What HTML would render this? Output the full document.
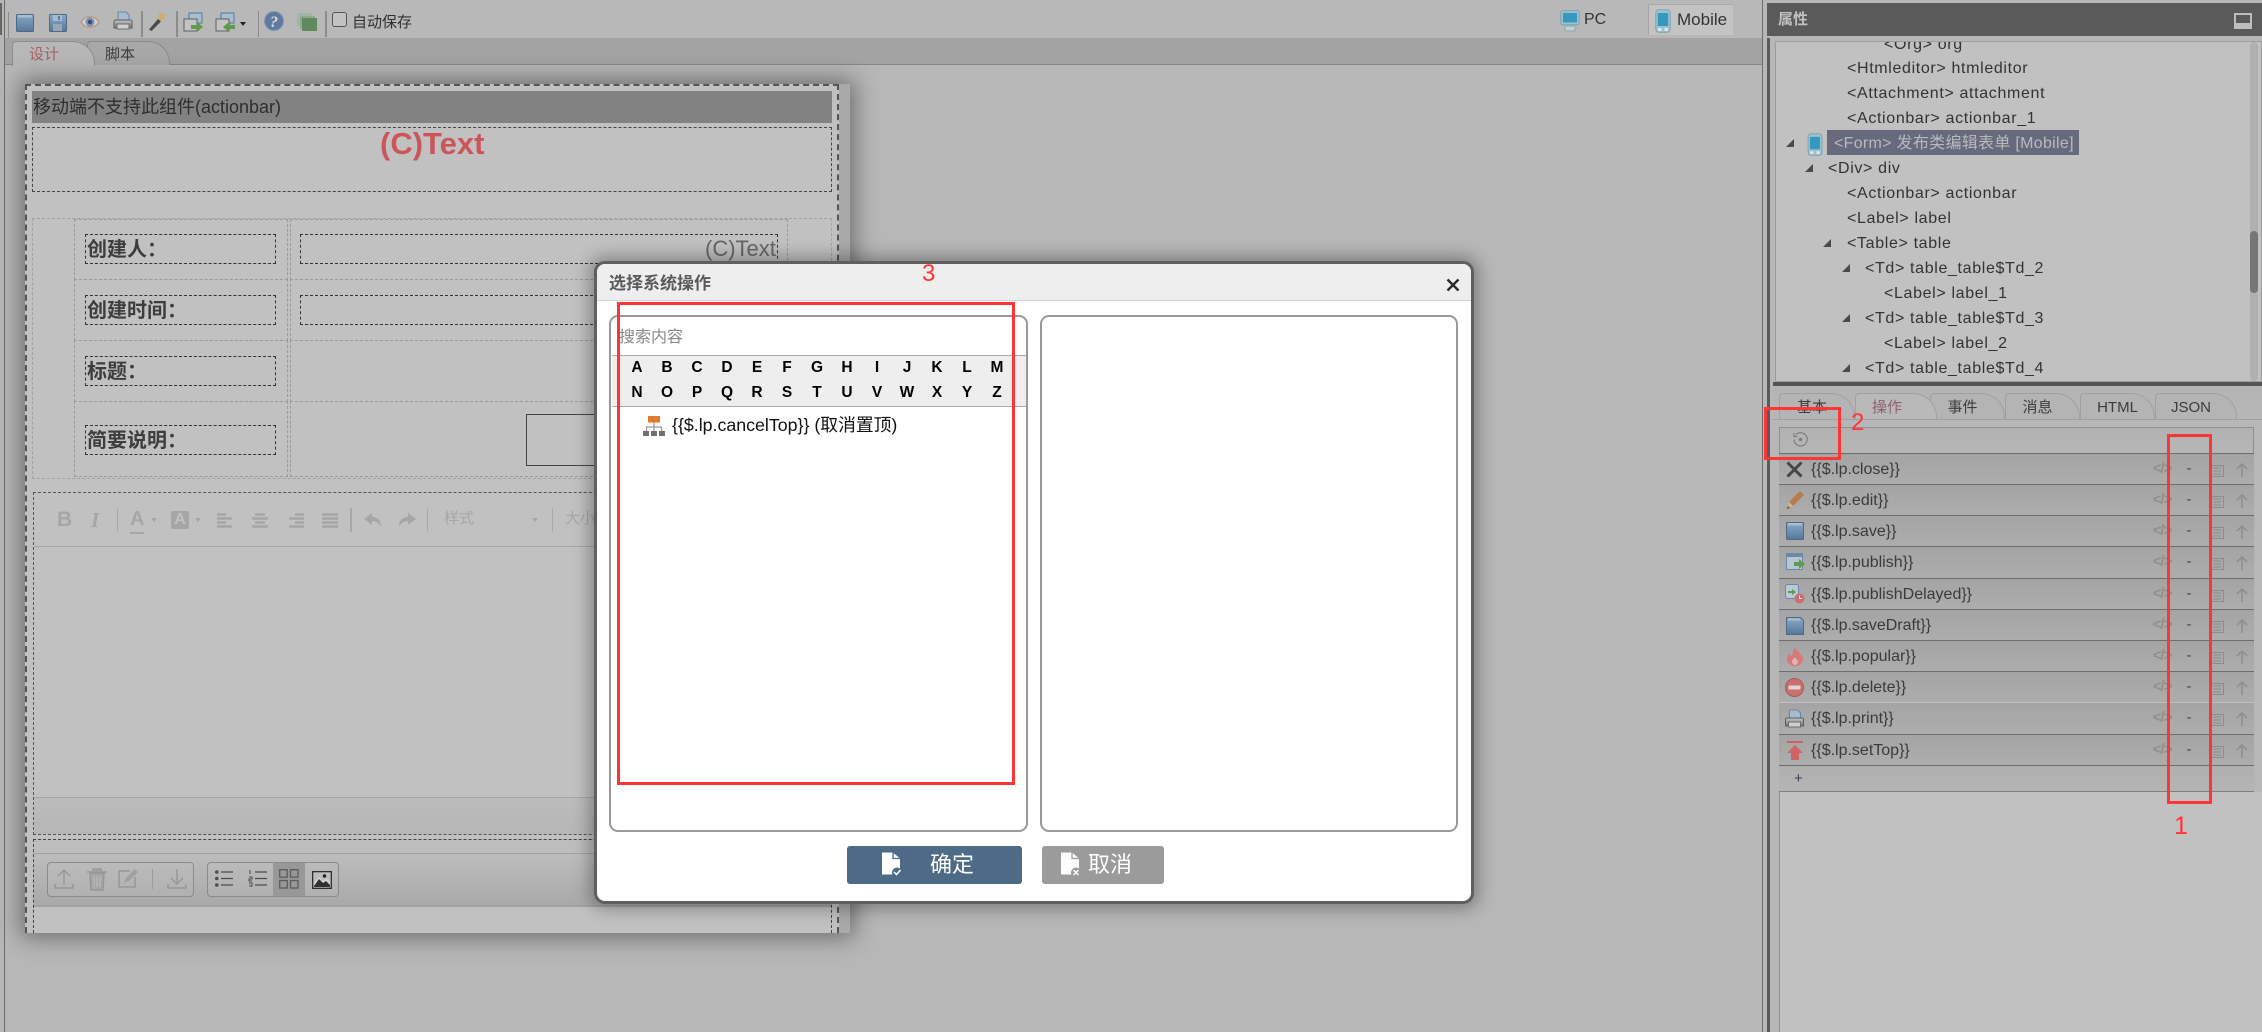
<!DOCTYPE html>
<html lang="zh"><head><meta charset="utf-8"><title>表单设计</title>
<style>
*{box-sizing:border-box}
html,body{margin:0;padding:0;width:2262px;height:1032px;overflow:hidden;background:#b7b7b7}
body{position:relative;font-family:"Liberation Sans","Noto Sans CJK SC",sans-serif;color:#333}
.abs{position:absolute}
svg{position:absolute;display:block;overflow:visible}
.sep{position:absolute;top:11px;width:2px;height:26px;background:#8b8b8b}
.lb{position:absolute;left:85px;width:191px;height:30px;border:1px dashed #333;font-weight:700;font-size:20px;line-height:30px;color:#3d3d3d;padding-left:1px;white-space:nowrap}
.rf{position:absolute;left:300px;width:478px;height:30px;border:1px dashed #333}
.cell{position:absolute;border:1px dashed #9a9a9a}
.tree{position:absolute;font-size:16px;letter-spacing:.65px;line-height:25px;height:25px;color:#333;white-space:nowrap}
.tri{position:absolute;width:0;height:0;border-left:8px solid transparent;border-bottom:8px solid #4a4a4a}
.tab{position:absolute;top:393px;height:26px;border:1px solid #a0a0a0;border-bottom:0;border-radius:4px 24px 0 0;font-size:15px;line-height:28px;text-align:center;color:#3c3c3c;padding-right:10px;background:#b4b4b4}
.row{position:absolute;left:1779px;width:475px;background:linear-gradient(#a4a4a4,#adadad);border-top:1px solid #6d6d6d}
.row .t{position:absolute;left:32px;top:0;line-height:32px;font-size:16px;color:#3a3a3a;white-space:nowrap}
.row .c{position:absolute;left:370px;top:0;width:26px;text-align:center;line-height:30px;font-size:15px;font-weight:700;color:#8f8f8f;letter-spacing:-1px}
.row .d{position:absolute;left:405px;top:0;width:10px;text-align:center;line-height:30px;font-size:15px;color:#444}
.red{position:absolute;border:3px solid #ff3434}
.num{position:absolute;color:#ff3434;line-height:1}
.ltr{display:grid;grid-template-columns:repeat(13,30px);grid-auto-rows:25px;position:absolute;left:622px;top:355px;font-weight:700;font-size:15.5px;color:#000;text-align:center;line-height:25px}
</style></head>
<body>
<svg width="0" height="0" style="position:absolute">
<defs>
<linearGradient id="gb" x1="0" y1="0" x2="0" y2="1"><stop offset="0" stop-color="#8aa8c6"/><stop offset="1" stop-color="#557898"/></linearGradient>
<linearGradient id="gp" x1="0" y1="0" x2="0" y2="1"><stop offset="0" stop-color="#c4c4c4"/><stop offset="1" stop-color="#777"/></linearGradient>
<symbol id="disk" viewBox="0 0 18 18"><rect x=".5" y=".5" width="17" height="17" rx="1" fill="url(#gb)" stroke="#4f6a86"/><rect x="2" y="1" width="14" height="2.5" fill="#a8bed2"/></symbol>
<symbol id="disk2" viewBox="0 0 18 18"><rect x=".5" y=".5" width="17" height="17" rx="1" fill="url(#gb)" stroke="#4f6a86"/><rect x="4" y="1" width="9" height="6" fill="#a9bccd"/><rect x="4" y="10" width="9" height="7" fill="#9aa6b2"/><rect x="9" y="2" width="2" height="4" fill="#5c7c9b"/></symbol>
<symbol id="disk3" viewBox="0 0 18 18"><path d="M.5 .5h14l3 3v14H.5z" fill="url(#gb)" stroke="#4f6a86"/><path d="M2 1.500h11l2 2H2z" fill="#a8bed2"/></symbol>
<symbol id="printer" viewBox="0 0 20 20"><path d="M5 1h8l3 3v5H5z" fill="#a5bcd1" stroke="#6a88a5"/><path d="M2 9h16a2 2 0 0 1 1 2v6H1v-6a2 2 0 0 1 1-2z" fill="url(#gp)" stroke="#5c5c5c"/><rect x="4" y="13" width="12" height="5" fill="#cfcfcf" stroke="#6c6c6c"/></symbol>
<symbol id="listi" viewBox="0 0 14 12"><rect x=".5" y=".5" width="13" height="11" fill="none" stroke="#8c8c8c"/><path d="M3 3h8M3 6h8M3 9h8" stroke="#8c8c8c"/></symbol>
<symbol id="up" viewBox="0 0 12 14"><path d="M6 14V1M1 6l5-5 5 5" fill="none" stroke="#8f8f8f" stroke-width="1.6"/></symbol>
<symbol id="impt" viewBox="0 0 20 20"><rect x="6" y="1" width="13" height="10" fill="#a7bdd2" stroke="#5c7690"/><rect x="1" y="7" width="13" height="12" fill="#c4c4c4" stroke="#5f5f5f"/></symbol>
<symbol id="phone" viewBox="0 0 16 24"><rect x=".8" y=".8" width="14.4" height="22.4" rx="3" fill="#9fc1cf" stroke="#7aa4b6"/><rect x="2.8" y="4" width="10.4" height="13" fill="#3499bd"/><rect x="3" y="19" width="3.5" height="3" fill="#dde5ea"/><rect x="9.5" y="19" width="3.5" height="3" fill="#dde5ea"/></symbol>
</defs>
</svg>

<!-- left edge -->
<div class="abs" style="left:0;top:3px;width:2px;height:32px;background:#666"></div>
<div class="abs" style="left:4px;top:0;width:1px;height:1032px;background:#6c6c6c"></div>

<!-- toolbar -->
<div class="abs" style="left:5px;top:0;width:1757px;height:38px;background:#b8b8b8"></div>
<div class="sep" style="left:8px;width:1px;top:12px"></div>
<svg style="left:16px;top:14px" width="18" height="18"><use href="#disk"/></svg>
<svg style="left:49px;top:14px" width="18" height="18"><use href="#disk2"/></svg>
<svg style="left:80px;top:14px" width="20" height="16" viewBox="0 0 20 16"><path d="M1 8c4-7 14-7 18 0-4 7-14 7-18 0z" fill="#d0d0d0" stroke="#b89a80" stroke-width="1.5"/><circle cx="10" cy="8" r="4.5" fill="#7590b8"/><circle cx="10" cy="8" r="2" fill="#3a4660"/></svg>
<svg style="left:113px;top:11px" width="20" height="20"><use href="#printer"/></svg>
<div class="sep" style="left:141px"></div>
<svg style="left:148px;top:11px" width="19" height="20" viewBox="0 0 19 20"><path d="M1 18.500 10 8l3 2.500L3.500 20z" fill="#4a4a4a"/><path d="M13 0l1.200 3.500L18 3l-2.300 3L18 9l-3.700-.7L13 11.500l-1-3.400-3.500-.6 2.800-2.400L10 1.500l2.500 1.500z" fill="#cfae66"/></svg>
<div class="sep" style="left:176px"></div>
<svg style="left:183px;top:12px" width="20" height="20"><use href="#impt"/></svg><svg style="left:191px;top:22px" width="12" height="10" viewBox="0 0 12 10"><path d="M0 3h6V0l6 5-6 5V7H0z" fill="#5f9a4d"/></svg>
<svg style="left:215px;top:12px" width="20" height="20"><use href="#impt"/></svg><svg style="left:223px;top:22px" width="12" height="10" viewBox="0 0 12 10"><path d="M12 3H6V0L0 5l6 5V7h6z" fill="#5f9a4d"/></svg>
<div class="abs" style="left:240px;top:22px;border-left:3px solid transparent;border-right:3px solid transparent;border-top:4px solid #222"></div>
<div class="sep" style="left:258px;width:1px"></div>
<svg style="left:264px;top:11px" width="20" height="20" viewBox="0 0 20 20"><circle cx="10" cy="10" r="9.5" fill="#5f7a9e" stroke="#8399b5"/><text x="10" y="16" text-anchor="middle" font-family="Liberation Serif" font-weight="700" font-style="italic" font-size="16" fill="#d8dee8">?</text></svg>
<svg style="left:297px;top:13px" width="20" height="18" viewBox="0 0 20 18"><rect x="0" y="0" width="15" height="13" fill="#a5b5a5"/><rect x="3" y="3" width="15" height="13" fill="#8fa88f"/><rect x="5" y="5" width="15" height="13" fill="#5e8a5e"/></svg>
<div class="sep" style="left:325px"></div>
<div class="abs" style="left:332px;top:12px;width:15px;height:15px;border:1px solid #555;border-radius:3px;background:#c2c2c2"></div>
<div class="abs" style="left:352px;top:12px;font-size:15px;line-height:22px;color:#303030">自动保存</div>

<!-- PC / mobile -->
<svg style="left:1560px;top:10px" width="20" height="22" viewBox="0 0 20 22"><rect x=".8" y=".8" width="18.4" height="14" rx="2" fill="#9fc1cf" stroke="#7aa4b6"/><rect x="3" y="3" width="14" height="9.5" fill="#3499bd"/><rect x="5" y="16" width="10" height="5" rx="1" fill="#c0d0d6" stroke="#8aa"/></svg>
<div class="abs" style="left:1584px;top:9px;font-size:16px;line-height:22px;color:#333">PC</div>
<div class="abs" style="left:1648px;top:4px;width:85px;height:31px;background:#c3c3c3;border-left:1px solid #a4a4a4;border-top:1px solid #aaa"></div>
<svg style="left:1655px;top:9px" width="16" height="24"><use href="#phone"/></svg>
<div class="abs" style="left:1677px;top:9px;font-size:17px;line-height:22px;color:#333">Mobile</div>

<!-- tabs strip -->
<div class="abs" style="left:5px;top:38px;width:1757px;height:27px;background:#a3a3a3;border-bottom:1px solid #868686"></div>
<div class="abs" style="left:87px;top:41px;width:83px;height:24px;border:1px solid #8a8a8a;border-bottom:0;border-radius:4px 22px 0 0;background:#a8a8a8;font-size:15px;line-height:25px;color:#3d3d3d;padding-left:17px">脚本</div>
<div class="abs" style="left:12px;top:41px;width:83px;height:25px;border:1px solid #8e8e8e;border-bottom:0;border-radius:4px 22px 0 0;background:#b7b7b7;font-size:15px;line-height:25px;color:#a55f5f;padding-left:16px">设计</div>

<!-- form sheet -->
<div class="abs" style="left:25px;top:84px;width:825px;height:849px;background:#c1c1c1;box-shadow:0 0 22px 4px rgba(0,0,0,.42)"></div>
<div class="abs" style="left:839px;top:84px;width:11px;height:849px;background:#a9a9a9"></div>
<div class="abs" style="left:25px;top:84px;width:814px;height:849px;border:2px dashed #555;border-bottom:0"></div>
<div class="abs" style="left:32px;top:91px;width:800px;height:32px;background:#828282;font-size:18px;line-height:32px;color:#2e2e2e;padding-left:1px;white-space:nowrap">移动端不支持此组件(actionbar)</div>
<div class="abs" style="left:32px;top:127px;width:800px;height:65px;border:1px dashed #444"></div>
<div class="abs" style="left:380px;top:126px;font-size:31px;font-weight:700;color:#cb5558;line-height:36px">(C)Text</div>

<div class="cell" style="left:32px;top:218px;width:800px;height:261px;border-color:#a3a3a3"></div>
<div class="cell" style="left:74px;top:219px;width:214px;height:61px"></div>
<div class="cell" style="left:74px;top:279px;width:214px;height:62px"></div>
<div class="cell" style="left:74px;top:340px;width:214px;height:62px"></div>
<div class="cell" style="left:74px;top:401px;width:214px;height:76px"></div>
<div class="cell" style="left:290px;top:219px;width:498px;height:61px"></div>
<div class="cell" style="left:290px;top:279px;width:498px;height:62px"></div>
<div class="cell" style="left:290px;top:340px;width:498px;height:62px"></div>
<div class="cell" style="left:290px;top:401px;width:498px;height:76px"></div>
<div class="lb" style="top:234px">创建人：</div>
<div class="lb" style="top:295px">创建时间：</div>
<div class="lb" style="top:356px">标题：</div>
<div class="lb" style="top:425px">简要说明：</div>
<div class="rf" style="top:234px"></div>
<div class="rf" style="top:295px"></div>
<div class="abs" style="left:705px;top:235px;font-size:22px;line-height:28px;color:#666">(C)Text</div>
<div class="abs" style="left:526px;top:414px;width:100px;height:52px;border:1px solid #444"></div>

<!-- editor -->
<div class="abs" style="left:33px;top:492px;width:799px;height:343px;border:1px dashed #555"></div>
<div class="abs" style="left:34px;top:546px;width:797px;height:1px;background:#a6a6a6"></div>
<div class="abs" style="left:34px;top:797px;width:797px;height:37px;background:linear-gradient(#bcbcbc,#b6b6b6);border-top:1px solid #a6a6a6"></div>
<div class="abs" style="left:57px;top:507px;font:700 21px/26px 'Liberation Sans',sans-serif;color:#a6a6a6">B</div>
<div class="abs" style="left:91px;top:507px;font:italic 700 21px/26px 'Liberation Serif',serif;color:#a6a6a6">I</div>
<div class="abs" style="left:117px;top:508px;width:1px;height:24px;background:#a8a8a8"></div>
<div class="abs" style="left:130px;top:507px;font:700 20px/24px 'Liberation Sans',sans-serif;color:#a6a6a6;border-bottom:2px solid #a6a6a6;padding-bottom:1px">A</div>
<div class="abs" style="left:151px;top:518px;border-left:3.5px solid transparent;border-right:3.5px solid transparent;border-top:4px solid #a6a6a6"></div>
<div class="abs" style="left:171px;top:511px;width:18px;height:18px;background:#a6a6a6;border-radius:2px;color:#c1c1c1;font:700 16px/18px 'Liberation Sans',sans-serif;text-align:center">A</div>
<div class="abs" style="left:195px;top:518px;border-left:3.5px solid transparent;border-right:3.5px solid transparent;border-top:4px solid #a6a6a6"></div>
<svg style="left:217px;top:513px" width="16" height="15" viewBox="0 0 16 15"><path d="M0 1.500h9M0 5.500h15M0 9.500h9M0 13.500h15" stroke="#a6a6a6" stroke-width="2.400"/></svg>
<svg style="left:252px;top:513px" width="16" height="15" viewBox="0 0 16 15"><path d="M3 1.500h10M0 5.500h16M3 9.500h10M0 13.500h16" stroke="#a6a6a6" stroke-width="2.400"/></svg>
<svg style="left:288px;top:513px" width="16" height="15" viewBox="0 0 16 15"><path d="M7 1.500h9M1 5.500h15M7 9.500h9M1 13.500h15" stroke="#a6a6a6" stroke-width="2.400"/></svg>
<svg style="left:322px;top:513px" width="16" height="15" viewBox="0 0 16 15"><path d="M0 1.500h16M0 5.500h16M0 9.500h16M0 13.500h16" stroke="#a6a6a6" stroke-width="2.400"/></svg>
<div class="abs" style="left:350px;top:508px;width:2px;height:24px;background:#a8a8a8"></div>
<svg style="left:364px;top:513px" width="18" height="15" viewBox="0 0 18 15"><path d="M8 0 0 6l8 6V8c4 0 7 2 9 6 0-6-3-10-9-10z" fill="#a6a6a6"/></svg>
<svg style="left:398px;top:513px" width="18" height="15" viewBox="0 0 18 15"><path d="M10 0l8 6-8 6V8c-4 0-7 2-9 6 0-6 3-10 9-10z" fill="#a6a6a6"/></svg>
<div class="abs" style="left:427px;top:508px;width:1px;height:24px;background:#a8a8a8"></div>
<div class="abs" style="left:444px;top:508px;font-size:15px;line-height:22px;color:#a6a6a6">样式</div>
<div class="abs" style="left:532px;top:518px;border-left:3.5px solid transparent;border-right:3.5px solid transparent;border-top:4px solid #a6a6a6"></div>
<div class="abs" style="left:552px;top:508px;width:1px;height:24px;background:#a8a8a8"></div>
<div class="abs" style="left:565px;top:508px;font-size:15px;line-height:22px;color:#a6a6a6">大小</div>

<!-- attachment -->
<div class="abs" style="left:33px;top:839px;width:799px;height:94px;background:#bdbdbd;border:1px dashed #444;border-bottom:0"></div>
<div class="abs" style="left:34px;top:853px;width:797px;height:54px;background:linear-gradient(#bdbdbd,#a9a9a9);border-top:1px solid #a2a2a2;border-bottom:2px solid #a2a2a2"></div>
<div class="abs" style="left:34px;top:907px;width:797px;height:26px;background:#c1c1c1"></div>
<div class="abs" style="left:47px;top:862px;width:147px;height:35px;border:1px solid #8b8b8b;border-radius:4px;background:rgba(190,190,190,.25)"></div>
<div class="abs" style="left:207px;top:862px;width:132px;height:35px;border:1px solid #8b8b8b;border-radius:4px;background:rgba(190,190,190,.25)"></div>
<svg style="left:54px;top:868px" width="20" height="22" viewBox="0 0 20 22"><path d="M10 17V2M4 8l6-6 6 6M1 16v4h18v-4" fill="none" stroke="#979797" stroke-width="1.500"/></svg>
<svg style="left:87px;top:868px" width="20" height="22" viewBox="0 0 20 22"><path d="M0 4h20M6 3V1h8v2M3 5l1 17h12l1-17z" fill="#a6a6a6" stroke="#979797" stroke-width="1.500"/><path d="M7 8v11M10 8v11M13 8v11" stroke="#bfbfbf"/></svg>
<svg style="left:118px;top:868px" width="21" height="20" viewBox="0 0 21 20"><path d="M17 9v10H1V3h11" fill="none" stroke="#979797" stroke-width="1.500"/><path d="M6 15l2-5 9-9 3 3-9 9z" fill="#a0a0a0"/></svg>
<div class="abs" style="left:152px;top:869px;width:1px;height:20px;background:#9c9c9c"></div>
<svg style="left:167px;top:868px" width="20" height="22" viewBox="0 0 20 22"><path d="M10 1v15M4 10l6 6 6-6M1 16v4h18v-4" fill="none" stroke="#979797" stroke-width="1.500"/></svg>
<svg style="left:215px;top:870px" width="18" height="17" viewBox="0 0 18 17"><circle cx="1.800" cy="2" r="1.800" fill="#4c4c4c"/><circle cx="1.800" cy="8.500" r="1.800" fill="#4c4c4c"/><circle cx="1.800" cy="15" r="1.800" fill="#4c4c4c"/><path d="M6 2h12M6 8.500h12M6 15h12" stroke="#4c4c4c" stroke-width="1.300"/></svg>
<svg style="left:249px;top:870px" width="18" height="17" viewBox="0 0 18 17"><path d="M1 0v4M0 7h3v2H0v2h3M0 13h3v3H0" fill="none" stroke="#4c4c4c"/><path d="M6 2h12M6 8.500h12M6 15h12" stroke="#4c4c4c" stroke-width="1.300"/></svg>
<div class="abs" style="left:273px;top:863px;width:32px;height:33px;background:#989898"></div>
<svg style="left:279px;top:869px" width="20" height="20" viewBox="0 0 20 20"><g fill="none" stroke="#5b5b5b" stroke-width="1.300"><rect x=".7" y=".7" width="7.500" height="7.500"/><rect x="11.500" y=".7" width="7.500" height="7.500"/><rect x=".7" y="11.500" width="7.500" height="7.500"/><rect x="11.500" y="11.500" width="7.500" height="7.500"/></g></svg>
<svg style="left:312px;top:871px" width="20" height="18" viewBox="0 0 20 18"><rect x=".7" y=".7" width="18.600" height="16.600" fill="#d5d5d5" stroke="#303030" stroke-width="1.400"/><path d="M2 15 7 8l4 4 3-2 4 4v2H2z" fill="#303030"/><path d="M2 2h16v8l-4-2-3 2-4-4-5 6z" fill="#bdbdbd"/><circle cx="12.500" cy="5" r="1.700" fill="#222"/></svg>

<!-- right panel -->
<div class="abs" style="left:1762px;top:0;width:1px;height:1032px;background:#6c6c6c"></div>
<div class="abs" style="left:1763px;top:0;width:499px;height:1032px;background:#b7b7b7"></div>
<div class="abs" style="left:1767px;top:3px;width:495px;height:33px;background:#5a5a5a;color:#c2c2c2;font-size:15px;font-weight:700;line-height:34px;padding-left:11px">属性</div>
<svg style="left:2234px;top:13px" width="18" height="16" viewBox="0 0 18 16"><rect width="18" height="16" fill="#bdbdbd"/><rect x="2" y="2" width="14" height="8" fill="#5a5a5a"/></svg>
<div class="abs" style="left:1767px;top:38px;width:3px;height:994px;background:#5a5a5a"></div>
<div class="abs" style="left:1775px;top:41px;width:487px;height:341px;background:#c1c1c1;border:1px solid #9c9c9c;overflow:hidden">
  <div class="tree" style="left:108px;top:-10px">&lt;Org&gt; org</div>
  <div class="tree" style="left:71px;top:14px">&lt;Htmleditor&gt; htmleditor</div>
  <div class="tree" style="left:71px;top:39px">&lt;Attachment&gt; attachment</div>
  <div class="tree" style="left:71px;top:64px">&lt;Actionbar&gt; actionbar_1</div>
  <div class="abs" style="left:51px;top:88px;width:252px;height:25px;background:#666a7c"></div>
  <div class="tree" style="left:58px;top:89px;color:#b9b9bd;letter-spacing:.3px">&lt;Form&gt; 发布类编辑表单 [Mobile]</div>
  <div class="tri" style="left:10px;top:97px"></div>
  <svg style="left:31px;top:91px" width="16" height="23"><use href="#phone"/></svg>
  <div class="tree" style="left:52px;top:114px">&lt;Div&gt; div</div>
  <div class="tri" style="left:29px;top:122px"></div>
  <div class="tree" style="left:71px;top:139px">&lt;Actionbar&gt; actionbar</div>
  <div class="tree" style="left:71px;top:164px">&lt;Label&gt; label</div>
  <div class="tree" style="left:71px;top:189px">&lt;Table&gt; table</div>
  <div class="tri" style="left:47px;top:197px"></div>
  <div class="tree" style="left:89px;top:214px">&lt;Td&gt; table_table$Td_2</div>
  <div class="tri" style="left:66px;top:222px"></div>
  <div class="tree" style="left:108px;top:239px">&lt;Label&gt; label_1</div>
  <div class="tree" style="left:89px;top:264px">&lt;Td&gt; table_table$Td_3</div>
  <div class="tri" style="left:66px;top:272px"></div>
  <div class="tree" style="left:108px;top:289px">&lt;Label&gt; label_2</div>
  <div class="tree" style="left:89px;top:314px">&lt;Td&gt; table_table$Td_4</div>
  <div class="tri" style="left:66px;top:322px"></div>
  <div class="abs" style="left:474px;top:0;width:8px;height:339px;background:#b0b0b0;border-radius:4px"></div>
  <div class="abs" style="left:474px;top:189px;width:8px;height:62px;background:#767676;border-radius:4px"></div>
</div>
<div class="abs" style="left:1773px;top:382px;width:489px;height:4px;background:#555"></div>

<!-- properties -->
<div class="abs" style="left:1773px;top:386px;width:489px;height:646px;background:linear-gradient(#b4b4b4 0,#b7b7b7 34px)"></div>
<div class="tab" style="left:1779px;width:76px">基本</div>
<div class="tab" style="left:2005px;width:75px">消息</div>
<div class="tab" style="left:1930px;width:75px">事件</div>
<div class="tab" style="left:1855px;width:82px;background:#b9b9b9;color:#8f6070;padding-right:18px">操作</div>
<div class="tab" style="left:2080px;width:75px;padding-right:0">HTML</div>
<div class="tab" style="left:2155px;width:82px">JSON</div>
<div class="abs" style="left:1773px;top:419px;width:489px;height:1px;background:#a0a0a0"></div>
<div class="abs" style="left:1779px;top:427px;width:475px;height:26px;background:linear-gradient(#b2b2b2,#b6b6b6);border:1px solid #8f8f8f;border-bottom:0"></div>
<svg style="left:1793px;top:432px" width="15" height="15" viewBox="0 0 15 15"><path d="M3 2.600A6.600 6.600 0 1 1 1 7.500" fill="none" stroke="#7e7e7e" stroke-width="1.200"/><path d="M1 1v3.500h3.500" fill="none" stroke="#7e7e7e" stroke-width="1.200"/><circle cx="7.500" cy="7.500" r="1.800" fill="#7e7e7e"/></svg>

<div class="row" style="top:453px;height:31px"><span class="t">{{$.lp.close}}</span><span class="c">&lt;/&gt;</span><span class="d">-</span><svg style="left:431px;top:11px" width="14" height="12"><use href="#listi"/></svg><svg style="left:457px;top:9px" width="12" height="14"><use href="#up"/></svg>
<svg style="left:7px;top:7px" width="17" height="17" viewBox="0 0 17 17"><path d="M1.500 1.500l14 14M15.500 1.500l-14 14" stroke="#454545" stroke-width="3"/></svg></div>
<div class="row" style="top:484px;height:31px"><span class="t">{{$.lp.edit}}</span><span class="c">&lt;/&gt;</span><span class="d">-</span><svg style="left:431px;top:11px" width="14" height="12"><use href="#listi"/></svg><svg style="left:457px;top:9px" width="12" height="14"><use href="#up"/></svg>
<svg style="left:7px;top:5px" width="19" height="20" viewBox="0 0 19 20"><path d="M3 12 14 1l4 4L7 16z" fill="#b97a4c"/><path d="M3 12l-2 7 6-3z" fill="#d2b48e"/><path d="M1 19l1-3 2 2z" fill="#6c4a30"/></svg></div>
<div class="row" style="top:515px;height:31px"><span class="t">{{$.lp.save}}</span><span class="c">&lt;/&gt;</span><span class="d">-</span><svg style="left:431px;top:11px" width="14" height="12"><use href="#listi"/></svg><svg style="left:457px;top:9px" width="12" height="14"><use href="#up"/></svg>
<svg style="left:7px;top:6px" width="18" height="18"><use href="#disk"/></svg></div>
<div class="row" style="top:546px;height:32px"><span class="t">{{$.lp.publish}}</span><span class="c">&lt;/&gt;</span><span class="d">-</span><svg style="left:431px;top:11px" width="14" height="12"><use href="#listi"/></svg><svg style="left:457px;top:9px" width="12" height="14"><use href="#up"/></svg>
<svg style="left:7px;top:6px" width="19" height="18" viewBox="0 0 19 18"><rect x=".5" y=".5" width="16" height="16" fill="#b8c6d2" stroke="#6c8aa8"/><rect x="1" y="1" width="15" height="3" fill="#6c8aa8"/><path d="M8 9h5V6l6 5-6 5v-3H8z" fill="#5f9a4d"/></svg></div>
<div class="row" style="top:578px;height:31px"><span class="t">{{$.lp.publishDelayed}}</span><span class="c">&lt;/&gt;</span><span class="d">-</span><svg style="left:431px;top:11px" width="14" height="12"><use href="#listi"/></svg><svg style="left:457px;top:9px" width="12" height="14"><use href="#up"/></svg>
<svg style="left:6px;top:5px" width="20" height="20" viewBox="0 0 20 20"><rect x=".5" y=".5" width="13" height="14" rx="2" fill="#b8cad8" stroke="#6c8aa8"/><path d="M3 7h4V5l4 3-4 3V9H3z" fill="#5f9a4d"/><circle cx="14.500" cy="14.500" r="5" fill="#cf6e6e"/><path d="M14.500 11.500v3h2.500" stroke="#eee" fill="none"/></svg></div>
<div class="row" style="top:609px;height:31px"><span class="t">{{$.lp.saveDraft}}</span><span class="c">&lt;/&gt;</span><span class="d">-</span><svg style="left:431px;top:11px" width="14" height="12"><use href="#listi"/></svg><svg style="left:457px;top:9px" width="12" height="14"><use href="#up"/></svg>
<svg style="left:7px;top:7px" width="18" height="18"><use href="#disk3"/></svg></div>
<div class="row" style="top:640px;height:31px"><span class="t">{{$.lp.popular}}</span><span class="c">&lt;/&gt;</span><span class="d">-</span><svg style="left:431px;top:11px" width="14" height="12"><use href="#listi"/></svg><svg style="left:457px;top:9px" width="12" height="14"><use href="#up"/></svg>
<svg style="left:8px;top:6px" width="16" height="19" viewBox="0 0 16 19"><path d="M8 0c1 4 8 7 8 12a8 7 0 0 1-16 0c0-3 2-5 3-6 0 2 1 3 2 3 1-3 1-6 3-9z" fill="#d87878"/><path d="M8 10c-2 2-3 3-3 5a3 3 0 0 0 6 0c0-2-2-3-3-5z" fill="#dcb4b4"/></svg></div>
<div class="row" style="top:671px;height:31px"><span class="t">{{$.lp.delete}}</span><span class="c">&lt;/&gt;</span><span class="d">-</span><svg style="left:431px;top:11px" width="14" height="12"><use href="#listi"/></svg><svg style="left:457px;top:9px" width="12" height="14"><use href="#up"/></svg>
<svg style="left:6px;top:6px" width="19" height="19" viewBox="0 0 19 19"><circle cx="9.500" cy="9.500" r="9" fill="#c8706c" stroke="#a85a58"/><rect x="3.500" y="7.500" width="12" height="4" rx="1" fill="#dcd6d6"/></svg></div>
<div class="row" style="top:702px;height:32px;border-top-color:#c0c0c0"><span class="t">{{$.lp.print}}</span><span class="c">&lt;/&gt;</span><span class="d">-</span><svg style="left:431px;top:11px" width="14" height="12"><use href="#listi"/></svg><svg style="left:457px;top:9px" width="12" height="14"><use href="#up"/></svg>
<svg style="left:5px;top:6px" width="21" height="20"><use href="#printer"/></svg></div>
<div class="row" style="top:734px;height:31px"><span class="t">{{$.lp.setTop}}</span><span class="c">&lt;/&gt;</span><span class="d">-</span><svg style="left:431px;top:11px" width="14" height="12"><use href="#listi"/></svg><svg style="left:457px;top:9px" width="12" height="14"><use href="#up"/></svg>
<svg style="left:7px;top:6px" width="18" height="19" viewBox="0 0 18 19"><path d="M1 1h16" stroke="#d06060" stroke-width="2"/><path d="M9 4l8 8h-4v7H5v-7H1z" fill="#cf6464"/></svg></div>
<div class="abs" style="left:1779px;top:765px;width:475px;height:27px;background:linear-gradient(#afafaf,#b5b5b5);border-top:1px solid #6d6d6d;border-bottom:1px solid #7f7f7f;font-size:15px;line-height:26px;color:#443a55;padding-left:15px">+</div>
<div class="abs" style="left:1779px;top:792px;width:483px;height:240px;background:#c1c1c1;border-left:1px solid #8f8f8f"></div>

<!-- dialog -->
<div class="abs" style="left:594px;top:261px;width:880px;height:643px;background:#fff;border:3px solid #5f5f5f;border-radius:11px;box-shadow:0 0 16px 5px rgba(0,0,0,.3);overflow:hidden">
  <div class="abs" style="left:0;top:0;width:874px;height:37px;background:#eee;border-bottom:1px solid #d4d4d4"></div>
  <div class="abs" style="left:12px;top:8px;font-size:17px;font-weight:700;line-height:24px;color:#5a5a5a">选择系统操作</div>
  <svg style="left:849px;top:14px" width="14" height="14" viewBox="0 0 14 14"><path d="M1.500 1.500l11 11M12.500 1.500l-11 11" stroke="#2a2a2a" stroke-width="2.400"/></svg>
</div>
<div class="abs" style="left:609px;top:315px;width:419px;height:517px;border:2px solid #999;border-radius:9px;background:#fff"></div>
<div class="abs" style="left:1040px;top:315px;width:418px;height:517px;border:2px solid #999;border-radius:9px;background:#fff"></div>
<div class="abs" style="left:619px;top:326px;font-size:16px;line-height:24px;color:#8a8a8a">搜索内容</div>
<div class="abs" style="left:612px;top:355px;width:414px;height:52px;background:#eee;border-top:1px solid #aaa;border-bottom:1px solid #aaa"></div>
<div class="ltr"><span>A</span><span>B</span><span>C</span><span>D</span><span>E</span><span>F</span><span>G</span><span>H</span><span>I</span><span>J</span><span>K</span><span>L</span><span>M</span><span>N</span><span>O</span><span>P</span><span>Q</span><span>R</span><span>S</span><span>T</span><span>U</span><span>V</span><span>W</span><span>X</span><span>Y</span><span>Z</span></div>
<svg style="left:643px;top:416px" width="22" height="20" viewBox="0 0 22 20"><rect x="5" y="0" width="12" height="6.500" fill="#e07b2c"/><path d="M11 6.500V11M3.500 15v-4h15v4M11 11v4" fill="none" stroke="#9a9a9a" stroke-width="1.300"/><rect x="0" y="15" width="6" height="5" fill="#6f6f6f"/><rect x="8" y="15" width="6" height="5" fill="#6f6f6f"/><rect x="16" y="15" width="6" height="5" fill="#6f6f6f"/></svg>
<div class="abs" style="left:672px;top:412px;font-size:17.800px;line-height:26px;color:#111;white-space:nowrap">{{$.lp.cancelTop}} (取消置顶)</div>

<div class="abs" style="left:847px;top:846px;width:175px;height:38px;background:#4d6b87;border-radius:3px;color:#fff;font-size:22px;line-height:38px"><span class="abs" style="left:83px;top:0">确定</span>
<svg style="left:34px;top:6px" width="22" height="25" viewBox="0 0 22 24"><path d="M1 0h11l7 6v16H1z" fill="#fff"/><path d="M12 0v6h7" fill="none" stroke="#4d6b87" stroke-width="1.300"/><circle cx="16" cy="20" r="5" fill="#4d6b87"/><path d="M13 19.500l2.500 2.500 4-4.500" fill="none" stroke="#fff" stroke-width="1.500"/></svg></div>
<div class="abs" style="left:1042px;top:846px;width:122px;height:38px;background:#9b9b9b;border-radius:3px;color:#fff;font-size:22px;line-height:38px"><span class="abs" style="left:46px;top:0">取消</span>
<svg style="left:18px;top:6px" width="22" height="25" viewBox="0 0 22 24"><path d="M1 0h11l7 6v16H1z" fill="#fff"/><path d="M12 0v6h7" fill="none" stroke="#9b9b9b" stroke-width="1.300"/><circle cx="16" cy="20" r="5" fill="#9b9b9b"/><path d="M13.500 17.500l5 5M18.500 17.500l-5 5" stroke="#fff" stroke-width="1.400"/></svg></div>

<!-- red annotations -->
<div class="red" style="left:617px;top:302px;width:398px;height:483px"></div>
<div class="num" style="left:922px;top:262px;font-size:24px">3</div>
<div class="red" style="left:1764px;top:407px;width:77px;height:53px"></div>
<div class="num" style="left:1851px;top:411px;font-size:24px">2</div>
<div class="red" style="left:2167px;top:434px;width:45px;height:370px"></div>
<div class="num" style="left:2174px;top:814px;font-size:25px">1</div>
</body></html>
